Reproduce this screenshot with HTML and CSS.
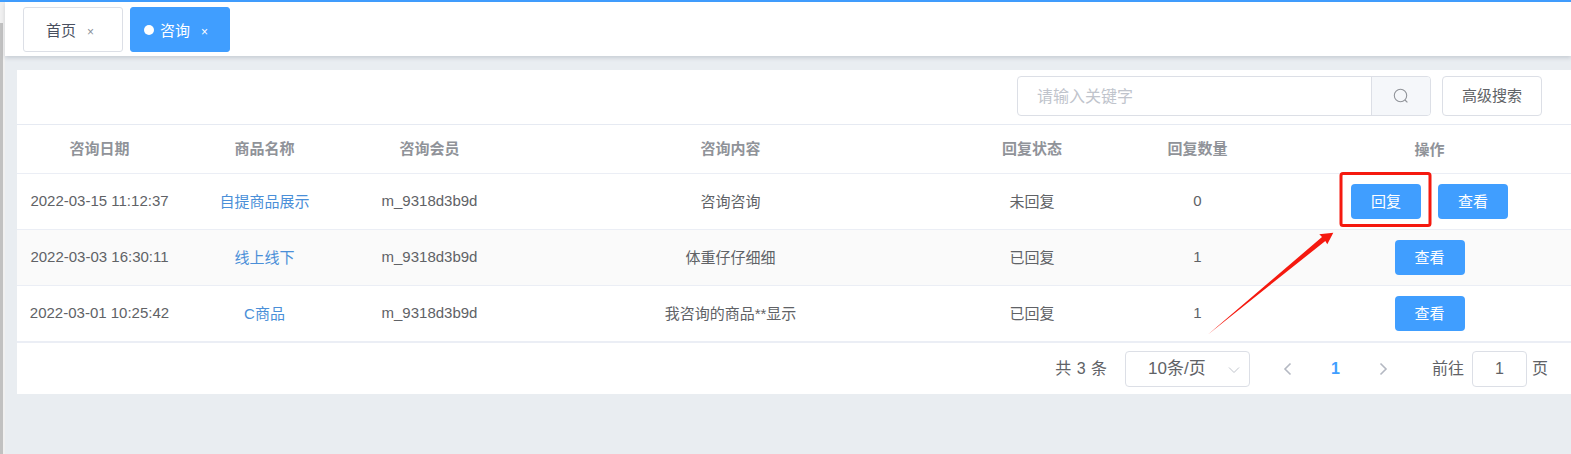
FILE: index.html
```html
<!DOCTYPE html>
<html lang="zh">
<head>
<meta charset="utf-8">
<title>咨询</title>
<link rel="stylesheet" href="styles.css">
</head>
<body>
<div class="app">
  <div class="topline"></div>
  <div class="shell">
    <div class="side"><div class="side-bar"></div></div>
    <div class="main">
      <div class="tabs">
        <div class="tab"><span class="tab-label">首页</span><span class="tab-x">×</span></div>
        <div class="tab tab-active"><span class="tab-dot"></span><span class="tab-label">咨询</span><span class="tab-x">×</span></div>
      </div>
      <div class="content">
        <div class="card">
          <div class="toolbar">
            <div class="search">
              <div class="search-input">请输入关键字</div>
              <div class="search-btn">
                <svg width="16" height="16" viewBox="0 0 16 16" fill="none" stroke="#909399" stroke-width="1.1"><circle cx="7.5" cy="7.5" r="6.2"/><path d="M12 12l2.4 2.4"/></svg>
              </div>
            </div>
            <div class="adv-btn">高级搜索</div>
          </div>
          <table class="grid">
            <colgroup>
              <col class="c-a"><col class="c-a"><col class="c-a"><col class="c-b"><col class="c-c"><col class="c-a"><col>
            </colgroup>
            <thead>
              <tr><th>咨询日期</th><th>商品名称</th><th>咨询会员</th><th>咨询内容</th><th>回复状态</th><th>回复数量</th><th class="ops">操作</th></tr>
            </thead>
            <tbody>
              <tr>
                <td>2022-03-15 11:12:37</td><td class="link">自提商品展示</td><td>m_9318d3b9d</td><td>咨询咨询</td><td>未回复</td><td>0</td>
                <td class="ops"><div class="ops-row"><span class="btn">回复</span><span class="btn">查看</span></div></td>
              </tr>
              <tr class="striped">
                <td>2022-03-03 16:30:11</td><td class="link">线上线下</td><td>m_9318d3b9d</td><td>体重仔仔细细</td><td>已回复</td><td>1</td>
                <td class="ops"><div class="ops-row"><span class="btn">查看</span></div></td>
              </tr>
              <tr>
                <td>2022-03-01 10:25:42</td><td class="link">C商品</td><td>m_9318d3b9d</td><td>我咨询的商品**显示</td><td>已回复</td><td>1</td>
                <td class="ops"><div class="ops-row"><span class="btn">查看</span></div></td>
              </tr>
            </tbody>
          </table>
          <div class="pager">
            <span class="total">共 3 条</span>
            <div class="size-select"><span>10条/页</span>
              <svg class="chev-down" width="12" height="8" viewBox="0 0 12 8" fill="none" stroke="#c0c4cc" stroke-width="1"><path d="M1 1.5l5 5 5-5"/></svg>
            </div>
            <svg class="nav-prev" width="9" height="14" viewBox="0 0 9 14" fill="none" stroke="#b4b8c2" stroke-width="1.6"><path d="M7.5 1.5L2 7l5.500 5.500"/></svg>
            <span class="page-cur">1</span>
            <svg class="nav-next" width="9" height="14" viewBox="0 0 9 14" fill="none" stroke="#b4b8c2" stroke-width="1.6"><path d="M1.500 1.500L7 7l-5.500 5.500"/></svg>
            <span class="goto">前往</span>
            <div class="page-input">1</div>
            <span class="goto-unit">页</span>
          </div>
        </div>
      </div>
    </div>
  </div>
  <svg class="annot" width="1571" height="454" viewBox="0 0 1571 454">
    <rect x="1341" y="173.500" width="89" height="52" rx="2" fill="none" stroke="#f5190f" stroke-width="3"/>
    <path d="M1208 334.500L1322 237L1319.300 234.300L1333.300 232.700L1327.300 244.300L1325.300 241Z" fill="#f5190f"/>
  </svg>
</div>
</body>
</html>
```
FILE: styles.css
```css
* { box-sizing: border-box; }
html, body { margin: 0; padding: 0; }
body {
  font-family: "Liberation Sans", "Noto Sans CJK SC", sans-serif;
  font-size: 15px;
  color: #606266;
  background: #e9edf1;
  overflow: hidden;
}
.app { position: relative; width: 1571px; height: 454px; display: flex; flex-direction: column; }
.topline { height: 2px; background: #409eff; flex: none; }
.shell { flex: 1; display: flex; min-height: 0; }
.side { width: 5px; flex: none; background: #f0f0f0; padding-top: 21px; }
.side-bar { width: 3px; height: 100%; background: #c1c1c1; }
.main { flex: 1; display: flex; flex-direction: column; min-width: 0; }
.tabs {
  height: 54px; flex: none; background: #fff; padding: 5px 0 0 18px;
  display: flex; align-items: flex-start; gap: 7px;
  box-shadow: 0 2px 4px rgba(80, 90, 110, .22);
  position: relative;
}
.tab {
  width: 100px; height: 45px; border: 1px solid #dcdfe6; border-radius: 3px;
  display: flex; align-items: center; padding-left: 22px; color: #495060;
}
.tab-label { margin-top: -1px; }
.tab-x { font-size: 12px; margin-left: 11px; margin-top: 5px; color: #8a8f99; }
.tab-active { background: #409eff; border-color: #409eff; color: #fff; padding-left: 13px; }
.tab-active .tab-x { color: #fff; }
.tab-dot { width: 10px; height: 10px; border-radius: 50%; background: #fff; margin-right: 6px; }
.content { flex: 1; padding: 14px 0 0 12px; }
.card { background: #fff; height: 324px; }
.toolbar {
  height: 55px; border-bottom: 1px solid #e6eaf2; padding: 6px 29px 0 0;
  display: flex; justify-content: flex-end; align-items: flex-start; gap: 11px;
}
.search { display: flex; height: 40px; width: 414px; border: 1px solid #dcdfe6; border-radius: 4px; overflow: hidden; }
.search-input { flex: 1; padding-left: 19px; line-height: 40px; font-size: 16px; color: #c0c4cc; }
.search-btn {
  width: 59px; background: #f5f7fa; border-left: 1px solid #dcdfe6;
  display: flex; align-items: center; justify-content: center;
}
.adv-btn {
  width: 100px; height: 40px; border: 1px solid #dcdfe6; border-radius: 4px;
  text-align: center; line-height: 38px; color: #606266;
}
.grid { width: 100%; border-collapse: collapse; table-layout: fixed; }
.c-a { width: 165px; }
.c-b { width: 437px; }
.c-c { width: 166px; }
.grid th {
  height: 48px; padding: 0 0 2px; font-weight: bold; color: #909399; text-align: center;
  border-bottom: 1px solid #ebeef5;
}
.grid td { height: 56px; padding: 0 0 2px; text-align: center; border-bottom: 1px solid #ebeef5; }
.grid tbody tr:last-child td { height: 57px; border-bottom: 2px solid #ebeef5; }
.striped td { background: #fafafa; }
.grid .link { color: #4a8fd8; }
.grid .ops { padding: 0 0 0 8px; }
.ops-row { display: flex; justify-content: center; gap: 17px; }
.btn {
  width: 70px; height: 35px; background: #409eff; color: #fff; border-radius: 4px;
  text-align: center; line-height: 35px;
}
.pager {
  height: 52px; padding: 8px 23px 0 0; display: flex; justify-content: flex-end; align-items: flex-start;
  font-size: 16px; line-height: 36px;
}
.total { margin-right: 18px; word-spacing: 1px; }
.size-select {
  width: 125px; height: 36px; border: 1px solid #dcdfe6; border-radius: 4px;
  padding-left: 22px; line-height: 34px; font-size: 17px; position: relative; margin-right: 33px;
}
.chev-down { position: absolute; right: 9px; top: 14px; }
.nav-prev { margin-top: 11px; }
.page-cur { color: #409eff; font-weight: bold; margin: 0 39px; }
.nav-next { margin-top: 11px; margin-right: 44px; }
.goto { margin-right: 8px; }
.page-input {
  width: 55px; height: 36px; border: 1px solid #dcdfe6; border-radius: 4px;
  text-align: center; line-height: 34px;
}
.goto-unit { margin-left: 5px; }
.annot { position: absolute; left: 0; top: 0; pointer-events: none; }
```
